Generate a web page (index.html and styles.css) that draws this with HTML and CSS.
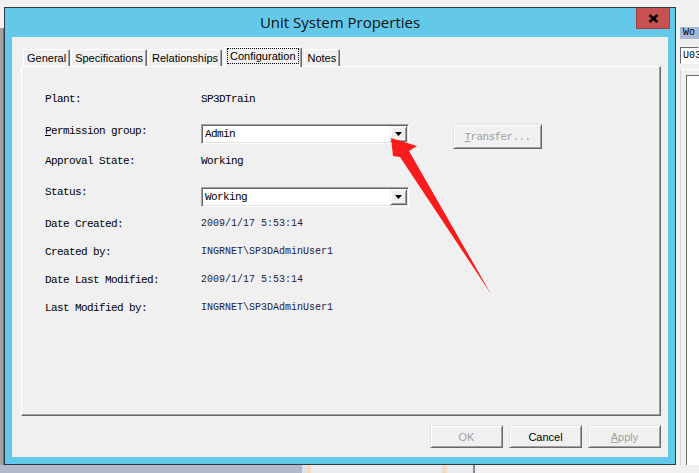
FILE: index.html
```html
<!DOCTYPE html>
<html lang="en">
<head>
    <meta charset="UTF-8">
    <title>Unit System Properties</title>
    <link rel="stylesheet" href="styles.css">
</head>
<body>
    <!-- desktop pieces around the dialog -->
    <div class="desk-edge"></div>

    <div class="side">
        <div class="side-head">Wo</div>
        <div class="side-input">U03</div>
        <div class="side-box"><div class="side-inner"></div></div>
    </div>

    <div class="desk-bottom">
        <span class="seg seg-slate"></span>
        <span class="seg seg-pale"></span>
        <span class="seg seg-peach"></span>
        <span class="seg seg-light"></span>
        <span class="seg seg-peach"></span>
        <span class="seg seg-light2"></span>
        <span class="seg seg-dark"></span>
        <span class="seg seg-light3"></span>
    </div>

    <!-- Properties dialog -->
    <div class="dialog">
        <div class="titlebar">
            <h1 class="title">Unit System Properties</h1>
            <div class="close">
                <svg width="11" height="9" viewBox="0 0 11 9"><path d="M1.5 1 L9.5 8 M9.5 1 L1.5 8" stroke="#000" stroke-width="2.4" fill="none"/></svg>
            </div>
        </div>

        <div class="client">
            <div class="tabs">
                <div class="tab">General</div>
                <div class="tab">Specifications</div>
                <div class="tab">Relationships</div>
                <div class="tab active"><span class="focus">Configuration</span></div>
                <div class="tab">Notes</div>
            </div>

            <div class="panel">
                <div class="props">
                    <div class="lbl">Plant:</div>
                    <div class="val">SP3DTrain</div>

                    <div class="lbl lbl-top"><u>P</u>ermission group:</div>
                    <div class="pick">
                        <div class="combo"><span class="combo-text">Admin</span><span class="drop"><svg width="7" height="4" viewBox="0 0 7 4"><path d="M0 0 H7 L3.5 4 Z" fill="#000"/></svg></span></div>
                        <button class="btn btn-transfer" disabled><u>T</u>ransfer...</button>
                    </div>

                    <div class="lbl">Approval State:</div>
                    <div class="val">Working</div>

                    <div class="lbl">Status:</div>
                    <div class="pick pick-low">
                        <div class="combo"><span class="combo-text">Working</span><span class="drop"><svg width="7" height="4" viewBox="0 0 7 4"><path d="M0 0 H7 L3.5 4 Z" fill="#000"/></svg></span></div>
                    </div>

                    <div class="lbl">Date Created:</div>
                    <div class="val small">2009/1/17 5:53:14</div>

                    <div class="lbl">Created by:</div>
                    <div class="val small">INGRNET\SP3DAdminUser1</div>

                    <div class="lbl">Date Last Modified:</div>
                    <div class="val small">2009/1/17 5:53:14</div>

                    <div class="lbl">Last Modified by:</div>
                    <div class="val small">INGRNET\SP3DAdminUser1</div>
                </div>
            </div>

            <div class="actions">
                <button class="btn" disabled>OK</button>
                <button class="btn">Cancel</button>
                <button class="btn" disabled><u>A</u>pply</button>
            </div>
        </div>
    </div>

    <!-- red pointer drawn over the dialog -->
    <svg class="pointer" width="699" height="473" viewBox="0 0 699 473">
        <polygon points="391,138 417,146 409,151 491,294 400,157 393,156" fill="#fa1c1c"/>
    </svg>
</body>
</html>
```

FILE: styles.css
```css
body {
    margin: 0;
    width: 699px;
    height: 473px;
    overflow: hidden;
    position: relative;
    background: #f0f0f0;
    font-family: "Liberation Sans", Arial, sans-serif;
}

/* window edge peeking out on the left */
.desk-edge {
    position: absolute;
    left: 0;
    top: 28px;
    width: 3px;
    height: 437px;
    background: #a3a3a3;
    border-right: 1px solid #6e6e6e;
}

/* strip of other windows under the dialog */
.desk-bottom {
    position: absolute;
    left: 0;
    top: 465px;
    width: 699px;
    height: 8px;
    display: flex;
}
.seg { height: 100%; }
.seg-slate { width: 302px; background: #b1b9cb; }
.seg-pale { width: 4px; background: #dde2e8; }
.seg-peach { width: 5px; background: #f0dcc6; }
.seg-light { width: 131px; background: #ebecf0; }
.seg-light2 { width: 26px; background: #ebecf0; }
.seg-dark { width: 2px; background: #8a8a8a; }
.seg-light3 { flex: 1; background: #f0f0f0; }

/* window on the right */
.side {
    position: absolute;
    left: 676px;
    top: 0;
    width: 23px;
    height: 465px;
    padding-top: 27px;
    box-sizing: border-box;
    background: #f0f0f0;
    overflow: hidden;
}
.side-head {
    height: 12px;
    margin-left: 4px;
    padding-left: 3px;
    background: #a3b9d5;
    font: 10px/12px "Liberation Mono", monospace;
    color: #000;
    white-space: nowrap;
}
.side-input {
    height: 17px;
    margin: 8px 0 0 4px;
    padding-left: 2px;
    box-sizing: border-box;
    background: #fff;
    border: 1px solid;
    border-color: #696969 #fff #fff #696969;
    font: 10px/15px "Liberation Mono", monospace;
    white-space: nowrap;
}
.side-box {
    height: 392px;
    margin: 5px 0 0 4px;
    padding: 5px 0 0 5px;
    border-top: 1px solid #fff;
    border-left: 1px solid #d4d4d4;
}
.side-inner {
    height: 100%;
    background: #fff;
    border-top: 1px solid #6b6b6b;
    border-left: 1px solid #6b6b6b;
}

/* Properties dialog */
.dialog {
    position: absolute;
    left: 4px;
    top: 7px;
    width: 672px;
    height: 458px;
    box-sizing: border-box;
    border: 1px solid #2c3a42;
    background: #64c9e9;
    padding: 0 7px 7px;
    display: flex;
    flex-direction: column;
}
.titlebar {
    height: 29px;
    margin: 0 -7px;
    display: grid;
    grid-template-columns: 1fr auto 1fr;
    align-items: start;
}
.title {
    grid-column: 2;
    margin: 0;
    font: 400 15px/29px "Open Sans", sans-serif;
    color: #0f0f0f;
}
.close {
    grid-column: 3;
    justify-self: end;
    margin-right: 5px;
    width: 34px;
    height: 21px;
    box-sizing: border-box;
    background: #c75050;
    border: 1px solid #9e4040;
    border-top: 0;
    display: flex;
    align-items: center;
    justify-content: center;
}

.client {
    flex: 1;
    background: #f0f0f0;
    padding: 10px 7px 0 9px;
    display: flex;
    flex-direction: column;
}

/* tab strip */
.tabs {
    display: flex;
    align-items: flex-end;
    gap: 1px;
    height: 19px;
    padding-left: 2px;
}
.tab {
    height: 17px;
    padding: 0 3px;
    box-sizing: border-box;
    border: 1px solid;
    border-color: #fff #696969 transparent #fff;
    border-bottom: 0;
    border-radius: 2px 2px 0 0;
    box-shadow: inset -1px 0 #a0a0a0;
    font-size: 11px;
    line-height: 17px;
    color: #000;
}
.tab.active {
    height: 20px;
    margin: 0 1px -1px;
    padding: 0 3px;
    position: relative;
    z-index: 1;
    background: #f0f0f0;
    line-height: 16px;
}
.focus {
    display: inline-block;
    padding: 0 2px;
    line-height: 14px;
    outline: 1px dotted #000;
    margin-top: 1px;
}

.panel {
    height: 350px;
    box-sizing: border-box;
    border: 1px solid;
    border-color: #fff #696969 #696969 #fff;
    box-shadow: inset -1px -1px #a0a0a0;
}

/* label / value grid */
.props {
    display: grid;
    grid-template-columns: 156px 1fr;
    grid-template-rows: 32px 30px 31px 32px 28px 28px 28px 28px;
    align-items: start;
    padding: 25px 0 0 23px;
    font-family: "Liberation Mono", monospace;
    font-size: 11px;
    letter-spacing: -0.6px;
    line-height: 12px;
    color: #000;
}
.lbl, .val { padding-top: 1px; }
.val.small {
    font-size: 10px;
    letter-spacing: 0;
    color: #1e1e3c;
}
.pick {
    display: flex;
    align-items: flex-start;
    gap: 44px;
}
.pick-low { margin-top: 2px; }

.combo {
    width: 208px;
    height: 20px;
    box-sizing: border-box;
    padding: 1px;
    display: flex;
    align-items: center;
    background: #fff;
    border: 1px solid;
    border-color: #a0a0a0 #fff #fff #a0a0a0;
    box-shadow: inset 1px 1px #696969, inset -1px -1px #e3e3e3;
}
.combo-text {
    flex: 1;
    padding-left: 2px;
}
.drop {
    width: 17px;
    height: 16px;
    box-sizing: border-box;
    display: flex;
    align-items: center;
    justify-content: center;
    background: #f0f0f0;
    border: 1px solid;
    border-color: #f0f0f0 #696969 #696969 #f0f0f0;
    box-shadow: inset 1px 1px #fff, inset -1px -1px #a0a0a0;
}

/* push buttons */
.btn {
    width: 73px;
    height: 23px;
    box-sizing: border-box;
    padding: 0;
    background: #f0f0f0;
    border: 1px solid;
    border-color: #e3e3e3 #696969 #696969 #e3e3e3;
    box-shadow: inset 1px 1px #fff, inset -1px -1px #a0a0a0;
    font: 11px "Liberation Sans", Arial, sans-serif;
    color: #000;
}
.btn:disabled { color: #a0a0a0; }
.btn-transfer {
    width: 89px;
    height: 25px;
    font: 11px "Liberation Mono", monospace;
    letter-spacing: -0.6px;
}

.actions {
    display: flex;
    justify-content: flex-end;
    gap: 6px;
    margin-top: 9px;
}

.pointer {
    position: absolute;
    left: 0;
    top: 0;
    pointer-events: none;
}
```
